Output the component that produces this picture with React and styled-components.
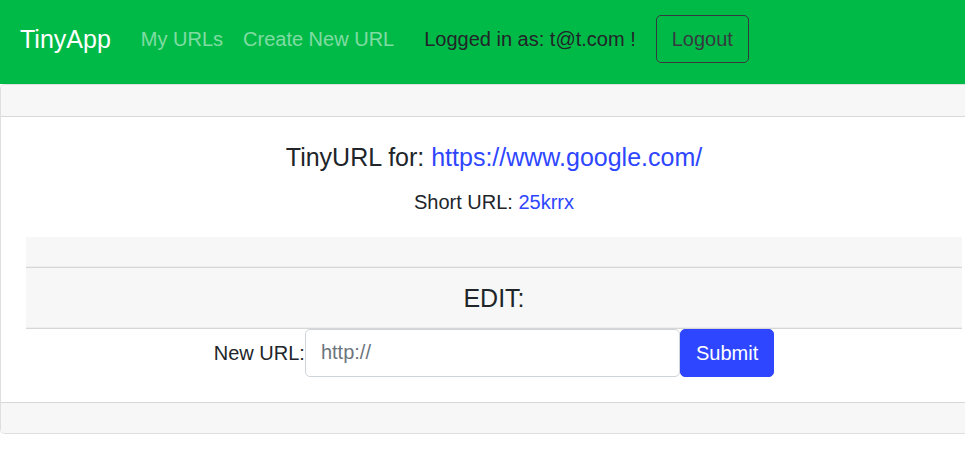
import React from "react";
import styled, { createGlobalStyle } from "styled-components";

const GlobalStyle = createGlobalStyle`
  *, *::before, *::after { box-sizing: border-box; }
  body {
    margin: 0;
    background: #fff;
    color: #212529;
    font-family: "Liberation Sans", Arial, sans-serif;
    font-size: 20px;
    line-height: 30px;
    overflow-x: hidden;
  }
`;

const Navbar = styled.header`
  display: flex;
  align-items: center;
  gap: 30px;
  padding: 15px 20px 21px;
  background: #00ba47;
`;

const Brand = styled.a`
  color: #fff;
  font-size: 25px;
  text-decoration: none;
  white-space: nowrap;
`;

const NavLinks = styled.nav`
  display: flex;
  gap: 20px;
`;

const NavLink = styled.a`
  color: rgba(255, 255, 255, 0.5);
  text-decoration: none;
  white-space: nowrap;
`;

const Session = styled.form`
  display: flex;
  align-items: center;
  gap: 20px;
  white-space: nowrap;
`;

const Button = styled.button`
  height: 48px;
  padding: 0 15px;
  border: 1px solid ${(p) => (p.$primary ? "#2e46ff" : "#343a40")};
  border-radius: 5px;
  background: ${(p) => (p.$primary ? "#2e46ff" : "transparent")};
  color: ${(p) => (p.$primary ? "#fff" : "#343a40")};
  font: inherit;
  cursor: pointer;
`;

const Card = styled.main`
  border: 1px solid #dfdfdf;
  border-right: 0;
  border-radius: 5px 0 0 5px;
  overflow: hidden;
  text-align: center;
`;

const CardHeader = styled.div`
  height: 32px;
  background: #f7f7f7;
  border-bottom: 1px solid #d8d8d8;
`;

const CardFooter = styled.div`
  height: 31px;
  background: #f7f7f7;
  border-top: 1px solid #d8d8d8;
`;

const CardBody = styled.div`
  padding: 25px 3px 25px 25px;
`;

const Title = styled.h5`
  margin: 0;
  font-size: 25px;
  font-weight: 400;
`;

const ShortUrl = styled.p`
  margin: 15px 0 20px;
`;

const TextLink = styled.a`
  color: #2e46ff;
  text-decoration: none;
`;

const Band = styled.div`
  padding: 15px 25px;
  background: #f7f7f7;
  border-bottom: 1px solid #d6d6d6;
  box-shadow: inset 0 -1px #eeeeee;
`;

const EditForm = styled.form`
  display: flex;
  align-items: center;
  justify-content: center;
`;

const Label = styled.label`
  white-space: nowrap;
`;

const UrlInput = styled.input`
  flex: 0 1 375px;
  min-width: 0;
  height: 48px;
  padding: 0 15px 2px;
  border: 1px solid #ced4da;
  border-radius: 5px;
  background: #fff;
  color: #495057;
  font: inherit;

  &::placeholder {
    color: #6c757d;
    opacity: 1;
  }
`;

const stop = (event) => event.preventDefault();

export default function App() {
  return (
    <>
      <GlobalStyle />
      <Navbar>
        <Brand href="#">TinyApp</Brand>
        <NavLinks>
          <NavLink href="#urls">My URLs</NavLink>
          <NavLink href="#new">Create New URL</NavLink>
        </NavLinks>
        <Session onSubmit={stop}>
          <span>Logged in as: t@t.com !</span>
          <Button type="submit">Logout</Button>
        </Session>
      </Navbar>
      <Card>
        <CardHeader />
        <CardBody>
          <Title>
            TinyURL for: <TextLink href="https://www.google.com/">https://www.google.com/</TextLink>
          </Title>
          <ShortUrl>
            Short URL: <TextLink href="#25krrx">25krrx</TextLink>
          </ShortUrl>
          <Band />
          <Band>
            <Title>EDIT:</Title>
          </Band>
          <EditForm onSubmit={stop}>
            <Label htmlFor="newURL">New URL:</Label>
            <UrlInput id="newURL" name="newURL" type="text" placeholder="http://" />
            <Button type="submit" $primary>
              Submit
            </Button>
          </EditForm>
        </CardBody>
        <CardFooter />
      </Card>
    </>
  );
}
